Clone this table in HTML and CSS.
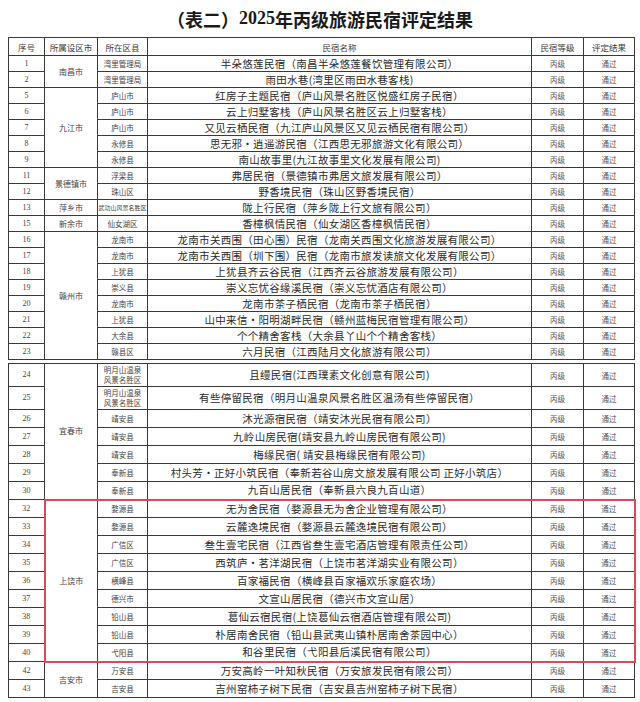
FILE: index.html
```html
<!DOCTYPE html>
<html lang="zh-CN">
<head>
<meta charset="utf-8">
<title>（表二）2025年丙级旅游民宿评定结果</title>
<link rel="stylesheet" href="styles.css">
</head>
<body>
<div class="page">
  <h1 class="title">（表二）<span class="digits">2025</span>年丙级旅游民宿评定结果</h1>

  <table class="grid seg1">
    <colgroup>
      <col class="c-no"><col class="c-city"><col class="c-dist"><col class="c-name"><col class="c-grade"><col class="c-res">
    </colgroup>
    <thead>
      <tr class="head"><th>序号</th><th>所属设区市</th><th>所在区县</th><th>民宿名称</th><th>民宿等级</th><th>评定结果</th></tr>
    </thead>
    <tbody>
      <tr><td class="no">1</td><td class="city" rowspan="2">南昌市</td><td class="dist">湾里管理局</td><td class="name">半朵悠莲民宿（南昌半朵悠莲餐饮管理有限公司）</td><td class="sm">丙级</td><td class="sm">通过</td></tr>
      <tr><td class="no">2</td><td class="dist">湾里管理局</td><td class="name">雨田水巷(湾里区雨田水巷客栈)</td><td class="sm">丙级</td><td class="sm">通过</td></tr>
      <tr><td class="no">5</td><td class="city" rowspan="5">九江市</td><td class="dist">庐山市</td><td class="name">红房子主题民宿（庐山风景名胜区悦盛红房子民宿）</td><td class="sm">丙级</td><td class="sm">通过</td></tr>
      <tr><td class="no">6</td><td class="dist">庐山市</td><td class="name">云上归墅客栈（庐山风景名胜区云上归墅客栈）</td><td class="sm">丙级</td><td class="sm">通过</td></tr>
      <tr><td class="no">7</td><td class="dist">庐山市</td><td class="name">又见云栖民宿（九江庐山风景区又见云栖民宿有限公司）</td><td class="sm">丙级</td><td class="sm">通过</td></tr>
      <tr><td class="no">8</td><td class="dist">永修县</td><td class="name">思无邪·逍遥游民宿（江西思无邪旅游文化有限公司）</td><td class="sm">丙级</td><td class="sm">通过</td></tr>
      <tr><td class="no">9</td><td class="dist">永修县</td><td class="name">南山故事里(九江故事里文化发展有限公司)</td><td class="sm">丙级</td><td class="sm">通过</td></tr>
      <tr><td class="no">11</td><td class="city" rowspan="2">景德镇市</td><td class="dist">浮梁县</td><td class="name">弗居民宿（景德镇市弗居文旅发展有限公司）</td><td class="sm">丙级</td><td class="sm">通过</td></tr>
      <tr><td class="no">12</td><td class="dist">珠山区</td><td class="name">野香境民宿（珠山区野香境民宿）</td><td class="sm">丙级</td><td class="sm">通过</td></tr>
      <tr><td class="no">13</td><td class="city">萍乡市</td><td class="dist tiny">武功山风景名胜区</td><td class="name">陇上行民宿（萍乡陇上行文旅有限公司）</td><td class="sm">丙级</td><td class="sm">通过</td></tr>
      <tr><td class="no">15</td><td class="city">新余市</td><td class="dist">仙女湖区</td><td class="name">香樟枫情民宿（仙女湖区香樟枫情民宿）</td><td class="sm">丙级</td><td class="sm">通过</td></tr>
      <tr><td class="no">16</td><td class="city" rowspan="8">赣州市</td><td class="dist">龙南市</td><td class="name">龙南市关西围（田心围）民宿（龙南关西围文化旅游发展有限公司）</td><td class="sm">丙级</td><td class="sm">通过</td></tr>
      <tr><td class="no">17</td><td class="dist">龙南市</td><td class="name">龙南市关西围（圳下围）民宿（龙南市旅发读旅文化发展有限公司）</td><td class="sm">丙级</td><td class="sm">通过</td></tr>
      <tr><td class="no">18</td><td class="dist">上犹县</td><td class="name">上犹县齐云谷民宿（江西齐云谷旅游发展有限公司）</td><td class="sm">丙级</td><td class="sm">通过</td></tr>
      <tr><td class="no">19</td><td class="dist">崇义县</td><td class="name">崇义忘忧谷缘溪民宿（崇义忘忧酒店有限公司）</td><td class="sm">丙级</td><td class="sm">通过</td></tr>
      <tr><td class="no">20</td><td class="dist">龙南市</td><td class="name">龙南市茶子栖民宿（龙南市茶子栖民宿）</td><td class="sm">丙级</td><td class="sm">通过</td></tr>
      <tr><td class="no">21</td><td class="dist">上犹县</td><td class="name">山中来信·阳明湖畔民宿（赣州蓝梅民宿管理有限公司）</td><td class="sm">丙级</td><td class="sm">通过</td></tr>
      <tr><td class="no">22</td><td class="dist">大余县</td><td class="name">个个精舍客栈（大余县丫山个个精舍客栈）</td><td class="sm">丙级</td><td class="sm">通过</td></tr>
      <tr><td class="no">23</td><td class="dist">赣县区</td><td class="name">六月民宿（江西陆月文化旅游有限公司）</td><td class="sm">丙级</td><td class="sm">通过</td></tr>
    </tbody>
  </table>

  <table class="grid seg2">
    <colgroup>
      <col class="c-no"><col class="c-city"><col class="c-dist"><col class="c-name"><col class="c-grade"><col class="c-res">
    </colgroup>
    <tbody>
      <tr class="tall"><td class="no">24</td><td class="city" rowspan="7">宜春市</td><td class="dist two">明月山温泉<br>风景名胜区</td><td class="name">且缦民宿(江西璞素文化创意有限公司)</td><td class="sm">丙级</td><td class="sm">通过</td></tr>
      <tr class="tall"><td class="no">25</td><td class="dist two">明月山温泉<br>风景名胜区</td><td class="name">有些停留民宿（明月山温泉风景名胜区温汤有些停留民宿）</td><td class="sm">丙级</td><td class="sm">通过</td></tr>
      <tr><td class="no">26</td><td class="dist">靖安县</td><td class="name">沐光源宿民宿（靖安沐光民宿有限公司）</td><td class="sm">丙级</td><td class="sm">通过</td></tr>
      <tr><td class="no">27</td><td class="dist">靖安县</td><td class="name">九岭山房民宿(靖安县九岭山房民宿有限公司)</td><td class="sm">丙级</td><td class="sm">通过</td></tr>
      <tr><td class="no">28</td><td class="dist">靖安县</td><td class="name">梅缘民宿( 靖安县梅缘民宿有限公司)</td><td class="sm">丙级</td><td class="sm">通过</td></tr>
      <tr><td class="no">29</td><td class="dist">奉新县</td><td class="name">村头芳·正好小筑民宿（奉新若谷山房文旅发展有限公司 正好小筑店）</td><td class="sm">丙级</td><td class="sm">通过</td></tr>
      <tr><td class="no">30</td><td class="dist">奉新县</td><td class="name">九百山居民宿（奉新县六良九百山道）</td><td class="sm">丙级</td><td class="sm">通过</td></tr>
    </tbody>
    <tbody class="boxed">
      <tr><td class="no">32</td><td class="city" rowspan="9">上饶市</td><td class="dist">婺源县</td><td class="name">无为舍民宿（婺源县无为舍企业管理有限公司）</td><td class="sm">丙级</td><td class="sm end">通过</td></tr>
      <tr><td class="no">33</td><td class="dist">婺源县</td><td class="name">云麓逸境民宿（婺源县云麓逸境民宿有限公司）</td><td class="sm">丙级</td><td class="sm end">通过</td></tr>
      <tr><td class="no">34</td><td class="dist">广信区</td><td class="name">叁生壹宅民宿（江西省叁生壹宅酒店管理有限责任公司）</td><td class="sm">丙级</td><td class="sm end">通过</td></tr>
      <tr><td class="no">35</td><td class="dist">广信区</td><td class="name">西筑庐·茗洋湖民宿（上饶市茗洋湖实业有限公司）</td><td class="sm">丙级</td><td class="sm end">通过</td></tr>
      <tr><td class="no">36</td><td class="dist">横峰县</td><td class="name">百家福民宿（横峰县百家福欢乐家庭农场）</td><td class="sm">丙级</td><td class="sm end">通过</td></tr>
      <tr><td class="no">37</td><td class="dist">德兴市</td><td class="name">文宣山居民宿（德兴市文宣山居）</td><td class="sm">丙级</td><td class="sm end">通过</td></tr>
      <tr><td class="no">38</td><td class="dist">铅山县</td><td class="name">葛仙云宿民宿(上饶葛仙云宿酒店管理有限公司)</td><td class="sm">丙级</td><td class="sm end">通过</td></tr>
      <tr><td class="no">39</td><td class="dist">铅山县</td><td class="name">朴居南舍民宿（铅山县武夷山镇朴居南舍茶园中心）</td><td class="sm">丙级</td><td class="sm end">通过</td></tr>
      <tr><td class="no">40</td><td class="dist">弋阳县</td><td class="name">和谷里民宿（弋阳县后溪民宿有限公司）</td><td class="sm">丙级</td><td class="sm end">通过</td></tr>
    </tbody>
    <tbody>
      <tr><td class="no">42</td><td class="city" rowspan="2">吉安市</td><td class="dist">万安县</td><td class="name">万安高岭一叶知秋民宿（万安旅发民宿有限公司）</td><td class="sm">丙级</td><td class="sm">通过</td></tr>
      <tr><td class="no">43</td><td class="dist">吉安县</td><td class="name">吉州窑柿子树下民宿（吉安县吉州窑柿子树下民宿）</td><td class="sm">丙级</td><td class="sm">通过</td></tr>
    </tbody>
  </table>
</div>
</body>
</html>
```

FILE: styles.css
```css
html, body {
  margin: 0;
  padding: 0;
  background: #ffffff;
}

.page {
  width: 640px;
  height: 702px;
  overflow: hidden;
  font-family: "Noto Sans CJK SC", sans-serif;
  color: #333;
}

.title {
  margin: 0;
  height: 37px;
  display: flex;
  align-items: center;
  justify-content: center;
  font-family: "Liberation Serif", "Noto Sans CJK SC", serif;
  font-size: 18px;
  font-weight: 700;
  color: #1a1a1a;
  letter-spacing: 0;
}

.title .digits {
  font-family: "Liberation Serif", serif;
  font-weight: 700;
}

.grid {
  margin-left: 8px;
  width: 626px;
  table-layout: fixed;
  border-collapse: collapse;
}

.seg1 {
  margin-bottom: 3px;
}

.c-no { width: 36px; }
.c-city { width: 53px; }
.c-dist { width: 50px; }
.c-name { width: 384px; }
.c-grade { width: 52px; }
.c-res { width: 51px; }

.grid th,
.grid td {
  border: 1px solid #3a3a3a;
  padding: 0;
  text-align: center;
  vertical-align: middle;
  white-space: nowrap;
  overflow: hidden;
  font-weight: 400;
}

.seg1 tr { height: 16px; }
.seg1 .head { height: 18px; }
.seg2 tr { height: 18px; }
.seg2 tr.tall { height: 23px; }

.grid th {
  font-size: 8.5px;
  line-height: 10px;
  color: #3a3a3a;
}

.no {
  font-family: "Liberation Serif", serif;
  font-size: 8px;
  line-height: 10px;
  color: #444;
}

.city {
  font-size: 8px;
  line-height: 10px;
  color: #444;
}

.dist {
  font-size: 7.5px;
  line-height: 9px;
  color: #444;
}

.dist.tiny {
  font-size: 6px;
  letter-spacing: 0;
}

.dist.two {
  white-space: normal;
  line-height: 10px;
}

.name {
  font-size: 10.5px;
  line-height: 12px;
  color: #2a2a2a;
  letter-spacing: 0.3px;
}

.sm {
  font-size: 7.5px;
  line-height: 9px;
  color: #555;
}

/* red marker box around rows 32–40 */
.boxed tr:first-child td:not(.no) {
  border-top: 2px solid #d94b58;
}
.boxed tr:last-child td:not(.no),
.boxed td.city {
  border-bottom: 2px solid #d94b58;
}
.boxed td.city {
  border-left: 2px solid #d94b58;
}
.boxed td.end {
  border-right: 2px solid #d94b58;
}
```
